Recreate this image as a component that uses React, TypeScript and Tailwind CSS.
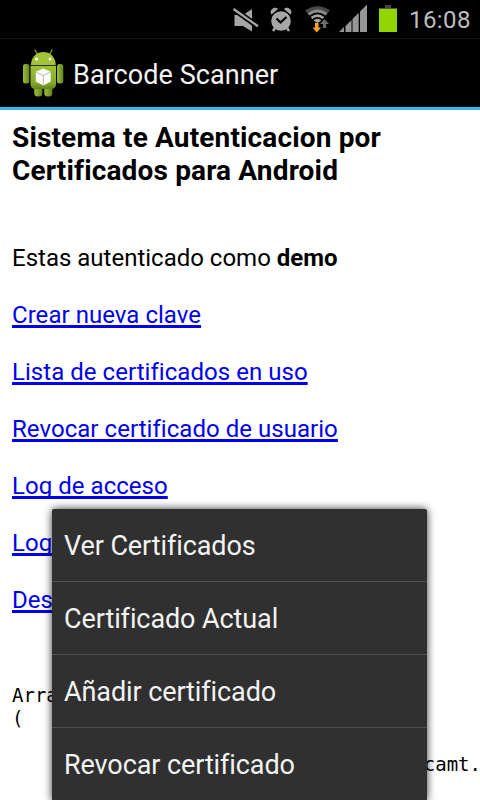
const links = [
  'Crear nueva clave',
  'Lista de certificados en uso',
  'Revocar certificado de usuario',
  'Log de acceso',
  'Log de errores',
  'Desconectar',
];

const menuItems = ['Ver Certificados', 'Certificado Actual', 'Añadir certificado', 'Revocar certificado'];

function StatusIcons() {
  return (
    <svg width="180" height="38" viewBox="220 0 180 38" className="block" aria-hidden="true">
      <g fill="#a6a6a6">
        <path d="M234.500 15H243L252 9V31.500L243 26H234.500z" />
        <path d="M234 9.300L258 26.500" stroke="#000" strokeWidth="5.500" />
        <path d="M233.500 9L258 26.300" stroke="#a6a6a6" strokeWidth="2.400" />
      </g>
      <g>
        <path d="M271.500 14a4 4 0 0 1 6-5zM290.500 14a4 4 0 0 0-6-5z" fill="#a6a6a6" stroke="#a6a6a6" />
        <path d="M275 28l-2 3M287 28l2 3" stroke="#a6a6a6" strokeWidth="2.500" />
        <circle cx="281" cy="21" r="9.800" fill="#a6a6a6" />
        <path d="M276.500 18.500l4 4 6-5.500" fill="none" stroke="#000" strokeWidth="2.200" />
      </g>
      <g fill="none">
        <path d="M305 10.500Q317.500 2 330 10.500L326.500 14Q317.500 7 308.500 14z" fill="#484848" />
        <path d="M308.500 14.500Q317.500 7.500 326.500 14.500" stroke="#8a8a8a" strokeWidth="2.800" />
        <path d="M311.500 18Q317.500 13.300 323.500 18" stroke="#a2a2a2" strokeWidth="2.500" />
        <path d="M313.500 20.500Q317.500 17 321.500 20.500L317.500 23z" fill="#a6a6a6" />
        <path d="M315 23h3.500v4.500h2.500l-4.300 5-4.200-5h2.500z" fill="#ffa21f" />
        <path d="M324.500 19l4.500 5h-3v4h-3v-4h-3z" fill="#6b6b6b" />
      </g>
      <path d="M339 32l5-5v5zM345.500 26l6-6V32h-6zM352.500 19l6.200-6.200V32h-6.200zM360 11.500l7-7V32h-7z" fill="#969696" />
      <path d="M385 5h6v3h-6z" fill="#444" />
      <path d="M379 8h18v1.500h-18z" fill="#555" />
      <path d="M379 9h18v23h-18z" fill="#93d500" />
    </svg>
  );
}

function AndroidIcon() {
  return (
    <svg width="42" height="50" viewBox="22 49 42 50" className="block" aria-hidden="true">
      <defs>
        <linearGradient id="shell" x1="0" y1="0" x2="0" y2="1">
          <stop offset="0" stopColor="#9fc137" />
          <stop offset="0.75" stopColor="#84a82c" />
          <stop offset="1" stopColor="#5f811b" />
        </linearGradient>
        <linearGradient id="limb" x1="0" y1="0" x2="1" y2="0">
          <stop offset="0" stopColor="#9cbd39" />
          <stop offset="1" stopColor="#64851e" />
        </linearGradient>
      </defs>
      <path d="M35 51l3.500 6M52 51l-3.500 6" stroke="#86a92d" strokeWidth="1.300" strokeLinecap="round" />
      <rect x="34.300" y="85" width="8" height="12.500" rx="3.500" fill="url(#limb)" />
      <rect x="44.300" y="85" width="8" height="12.500" rx="3.500" fill="url(#limb)" />
      <rect x="23" y="65" width="6.300" height="19.500" rx="2.500" fill="url(#limb)" />
      <rect x="57" y="65" width="6.300" height="19.500" rx="2.500" fill="url(#limb)" />
      <path d="M31 66C31 48.500 55.700 48.500 55.700 66z" fill="#a3c43a" />
      <path d="M30.500 66.800h25.500V85q0 5-5 5H35.500q-5 0-5-5z" fill="url(#shell)" />
      <circle cx="36.500" cy="60" r="1.500" fill="#fff" />
      <circle cx="50" cy="60" r="1.500" fill="#fff" />
      <path d="M43.300 69.500l7.400 3.300v9.700l-7.400 4-7.500-4v-9.700z" fill="#fff" />
      <path d="M35.800 73l7.500 3.500 7.400-3.500M43.300 76.500V86.500" fill="none" stroke="#a9b795" strokeWidth="0.900" />
    </svg>
  );
}

export default function App() {
  return (
    <div className="relative flex h-[800px] w-[480px] flex-col overflow-hidden bg-white font-['Roboto',sans-serif] text-black">
      <div className="flex h-[38px] shrink-0 items-center bg-black pl-[220px]">
        <StatusIcons />
        <span className="ml-[9px] mt-[2px] whitespace-nowrap text-[24px] leading-[28px] tracking-[0.4px] text-[#bebebe]">16:08</span>
      </div>
      <header className="flex h-[72px] shrink-0 items-center border-t border-b-3 border-t-[#121212] border-b-[#33b5e5] bg-black pl-[22px]">
        <AndroidIcon />
        <h1 className="mt-[4px] ml-[9px] whitespace-nowrap text-[27px] leading-[32px] tracking-[0.06px] text-[#f3f3f3]">Barcode Scanner</h1>
      </header>
      <main className="flex flex-col px-3 pt-[11px]">
        <h2 className="whitespace-nowrap text-[28px] font-bold leading-[33px] tracking-[0.15px]">
          Sistema te Autenticacion por
          <br />
          Certificados para Android
        </h2>
        <p className="mt-[46px] h-[57px] whitespace-nowrap text-[24px] leading-[50px]">
          Estas autenticado como <b>demo</b>
        </p>
        {links.map((label) => (
          <div key={label} className="h-[57px] whitespace-nowrap text-[24px] leading-[50px] tracking-[0.04px]">
            <a className="text-[#0000ee] underline decoration-[2.5px] underline-offset-[2px] [text-decoration-skip-ink:none]">{label}</a>
          </div>
        ))}
        <pre className="mt-[52px] font-['DejaVu_Sans_Mono',monospace] text-[19px] leading-[23px]">
          {'Array\n(\n\n                                    camt.'}
        </pre>
      </main>
      <nav className="absolute top-[509px] left-[52px] w-[375px] rounded-t-[2px] bg-[#303030] shadow-[0_0_8px_rgba(0,0,0,0.8)]">
        {menuItems.map((item) => (
          <div key={item} className="flex h-[73px] items-center border-b border-[#505050] pt-[2px] pl-3">
            <span className="whitespace-nowrap text-[27px] leading-[32px] tracking-[-0.1px] text-[#f3f3f3]">{item}</span>
          </div>
        ))}
      </nav>
    </div>
  );
}
